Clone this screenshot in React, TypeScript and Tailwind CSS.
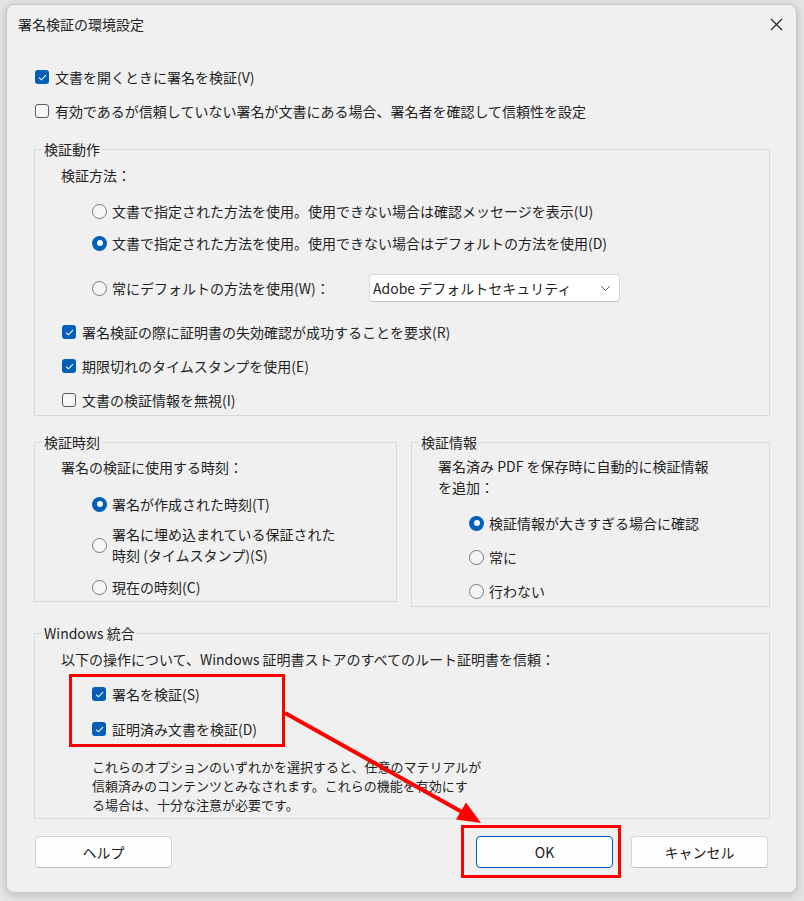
import React from "react";

const Check = ({ checked }: { checked: boolean }) =>
  checked ? (
    <span className="flex h-[14px] w-[14px] shrink-0 items-center justify-center rounded-[3px] bg-[#005fb8]">
      <svg width="9" height="7" viewBox="0 0 9 7" fill="none">
        <path d="M1 3.6 L3.4 5.8 L8 1.2" stroke="#ffffff" strokeWidth="1.1" />
      </svg>
    </span>
  ) : (
    <span className="h-[14px] w-[14px] shrink-0 rounded-[3px] border border-[#5c5c5c] bg-[#f6f6f6]" />
  );

const Radio = ({ checked }: { checked: boolean }) =>
  checked ? (
    <span className="flex h-[15px] w-[15px] shrink-0 items-center justify-center rounded-full bg-[#005fb8]">
      <span className="h-[6px] w-[6px] rounded-full bg-white" />
    </span>
  ) : (
    <span className="h-[15px] w-[15px] shrink-0 rounded-full border border-[#7a7a7a] bg-[#f6f6f6]" />
  );

const CheckRow = ({
  checked,
  label,
  className = "",
}: {
  checked: boolean;
  label: string;
  className?: string;
}) => (
  <div className={`flex h-[24px] items-center gap-[6px] ${className}`}>
    <Check checked={checked} />
    <span>{label}</span>
  </div>
);

const RadioRow = ({
  checked,
  children,
  className = "",
}: {
  checked: boolean;
  children: React.ReactNode;
  className?: string;
}) => (
  <div className={`flex min-h-[24px] items-center gap-[5px] ${className}`}>
    <Radio checked={checked} />
    <span className="leading-[21px]">{children}</span>
  </div>
);

const Group = ({
  title,
  className = "",
  children,
}: {
  title: string;
  className?: string;
  children: React.ReactNode;
}) => (
  <fieldset className={`border border-[#dadada] ${className}`}>
    <legend className="ml-[7px] px-[2px] leading-[20px]">{title}</legend>
    {children}
  </fieldset>
);

const Button = ({ label, primary = false }: { label: string; primary?: boolean }) => (
  <button
    className={`flex h-[32px] w-[137px] items-center justify-center rounded-[4px] border bg-[#fdfdfd] text-[14px] text-[#1b1b1b] ${
      primary ? "border-[#005fb8]" : "border-[#d5d5d5] border-b-[#c2c2c2]"
    }`}
  >
    {label}
  </button>
);

export default function App() {
  return (
    <div className="relative h-[901px] w-[804px] overflow-hidden bg-[#e4e4e4] pl-[6px] pt-[4px] font-['Noto_Sans_CJK_JP','Noto_Sans',sans-serif] text-[14px] text-[#1f1f1f]">
      <div className="w-[791px] rounded-[8px] border border-[#c9c9c9] bg-[#f0f0f0] shadow-[0_2px_10px_rgba(0,0,0,0.18)]">
        {/* title bar */}
        <div className="flex h-[39px] items-center justify-between pl-[11px] pr-[13px]">
          <span className="text-[14px]">署名検証の環境設定</span>
          <svg width="13" height="13" viewBox="0 0 13 13">
            <path d="M1 1 L12 12 M12 1 L1 12" stroke="#1b1b1b" strokeWidth="1.1" />
          </svg>
        </div>

        <div className="pb-[24px] pl-[27px] pr-[26px]">
          <CheckRow checked label="文書を開くときに署名を検証(V)" className="ml-[1px] mt-[21px]" />
          <CheckRow
            checked={false}
            label="有効であるが信頼していない署名が文書にある場合、署名者を確認して信頼性を設定"
            className="ml-[1px] mt-[10px]"
          />

          {/* 検証動作 */}
          <Group title="検証動作" className="mt-[16px] pb-[3px]">
            <div className="ml-[26px] mt-[4px] flex h-[24px] items-center">検証方法：</div>
            <RadioRow checked={false} className="ml-[57px] mt-[12px]">
              文書で指定された方法を使用。使用できない場合は確認メッセージを表示(U)
            </RadioRow>
            <RadioRow checked className="ml-[57px] mt-[8px]">
              文書で指定された方法を使用。使用できない場合はデフォルトの方法を使用(D)
            </RadioRow>
            <div className="ml-[57px] mt-[19px] flex h-[28px] items-center">
              <div className="flex w-[277px] items-center gap-[5px]">
                <Radio checked={false} />
                <span>常にデフォルトの方法を使用(W)：</span>
              </div>
              <div className="flex h-[28px] w-[251px] items-center justify-between rounded-[4px] border border-[#d9d9d9] border-b-[#c4c4c4] bg-white pl-[3px] pr-[8px]">
                <span>Adobe デフォルトセキュリティ</span>
                <svg width="11" height="7" viewBox="0 0 11 7" fill="none">
                  <path d="M1 1 L5.5 5.5 L10 1" stroke="#5c5c5c" strokeWidth="1" />
                </svg>
              </div>
            </div>
            <CheckRow
              checked
              label="署名検証の際に証明書の失効確認が成功することを要求(R)"
              className="ml-[27px] mt-[18px]"
            />
            <CheckRow checked label="期限切れのタイムスタンプを使用(E)" className="ml-[27px] mt-[10px]" />
            <CheckRow checked={false} label="文書の検証情報を無視(I)" className="ml-[27px] mt-[10px]" />
          </Group>

          {/* 検証時刻 / 検証情報 */}
          <div className="mt-[16px] flex items-start gap-[14px]">
            <Group title="検証時刻" className="w-[363px] pb-[2px]">
              <div className="ml-[26px] mt-[3px] flex h-[24px] items-center">署名の検証に使用する時刻：</div>
              <RadioRow checked className="ml-[57px] mt-[13px]">
                署名が作成された時刻(T)
              </RadioRow>
              <RadioRow checked={false} className="ml-[57px] mt-[8px]">
                署名に埋め込まれている保証された
                <br />
                時刻 (タイムスタンプ)(S)
              </RadioRow>
              <RadioRow checked={false} className="ml-[57px] mt-[9px]">
                現在の時刻(C)
              </RadioRow>
            </Group>
            <Group title="検証情報" className="w-[359px] pb-[3px]">
              <div className="ml-[26px] mt-[4px] leading-[21px]">
                署名済み PDF を保存時に自動的に検証情報
                <br />
                を追加：
              </div>
              <RadioRow checked className="ml-[57px] mt-[13px]">
                検証情報が大きすぎる場合に確認
              </RadioRow>
              <RadioRow checked={false} className="ml-[57px] mt-[10px]">
                常に
              </RadioRow>
              <RadioRow checked={false} className="ml-[57px] mt-[10px]">
                行わない
              </RadioRow>
            </Group>
          </div>

          {/* Windows 統合 */}
          <Group title="Windows 統合" className="mt-[16px] pb-[4px]">
            <div className="ml-[26px] mt-[4px] flex h-[24px] items-center">
              以下の操作について、Windows 証明書ストアのすべてのルート証明書を信頼：
            </div>
            <div className="ml-[34px] mt-[3px] w-[216px] border-[3px] border-[#ff0000] pb-[3px] pl-[20px] pt-[5px]">
              <CheckRow checked label="署名を検証(S)" />
              <CheckRow checked label="証明済み文書を検証(D)" className="mt-[11px]" />
            </div>
            <p className="ml-[57px] mt-[10px] text-[13px] leading-[19px]">
              これらのオプションのいずれかを選択すると、任意のマテリアルが
              <br />
              信頼済みのコンテンツとみなされます。これらの機能を有効にす
              <br />
              る場合は、十分な注意が必要です。
            </p>
          </Group>

          {/* buttons */}
          <div className="mt-[17px] flex items-center">
            <div className="ml-[1px]">
              <Button label="ヘルプ" />
            </div>
            <div className="relative ml-[304px]">
              <Button label="OK" primary />
              <div className="pointer-events-none absolute left-[-15px] top-[-11px] h-[53px] w-[160px] border-[3px] border-[#ff0000]" />
            </div>
            <div className="ml-[18px]">
              <Button label="キャンセル" />
            </div>
          </div>
        </div>
      </div>

      {/* annotation arrow */}
      <svg
        className="pointer-events-none absolute left-0 top-0"
        width="804"
        height="901"
        viewBox="0 0 804 901"
      >
        <line x1="285" y1="713" x2="462" y2="812" stroke="#ff0000" strokeWidth="4" />
        <polygon points="481,823 456,819.5 466,802.5" fill="#ff0000" />
      </svg>
    </div>
  );
}
